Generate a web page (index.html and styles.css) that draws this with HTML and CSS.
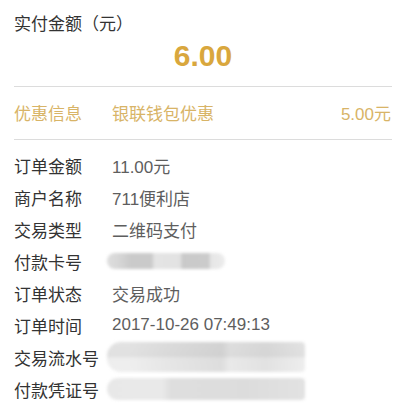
FILE: index.html
```html
<!DOCTYPE html>
<html lang="zh-CN">
<head>
<meta charset="utf-8">
<title>交易详情</title>
<link rel="stylesheet" href="styles.css">
</head>
<body>
<div class="page">
  <div class="title">实付金额（元）</div>
  <div class="amount">6.00</div>
  <div class="discount">
    <span class="label">优惠信息</span>
    <span class="dname">银联钱包优惠</span>
    <span class="dval">5.00元</span>
  </div>
  <div class="list">
    <div class="row"><span class="label">订单金额</span><span class="val">11.00元</span></div>
    <div class="row"><span class="label">商户名称</span><span class="val">711便利店</span></div>
    <div class="row"><span class="label">交易类型</span><span class="val">二维码支付</span></div>
    <div class="row"><span class="label">付款卡号</span><span class="blur blur-card"></span></div>
    <div class="row"><span class="label">订单状态</span><span class="val">交易成功</span></div>
    <div class="row"><span class="label">订单时间</span><span class="val">2017-10-26 07:49:13</span></div>
    <div class="row"><span class="label">交易流水号</span><span class="blur blur-serial"></span></div>
    <div class="row"><span class="label">付款凭证号</span><span class="blur blur-voucher"></span></div>
  </div>
</div>
</body>
</html>
```

FILE: styles.css
```css
html, body {
  margin: 0;
  padding: 0;
  background: #fff;
}
body {
  font-family: "Liberation Sans", "Noto Sans CJK SC", sans-serif;
  font-size: 17px;
  color: #333;
}
.page {
  margin: 0 18px 0 14px;
  padding-top: 13px;
}
.title {
  line-height: 24px;
  height: 24px;
}
.amount {
  text-align: center;
  font-size: 30px;
  font-weight: bold;
  color: #d9a73d;
  line-height: 36px;
  padding: 1px 0 12px;
  border-bottom: 1px solid #dcdcdc;
}
.discount {
  display: flex;
  align-items: center;
  height: 51px;
  padding-bottom: 1px;
  color: #d8b467;
  border-bottom: 1px solid #dcdcdc;
}
.discount .label {
  width: 98px;
}
.discount .dname {
  flex: 1;
}
.discount .dval {
  padding-right: 1px;
}
.list {
  padding-top: 9px;
}
.row {
  display: flex;
  align-items: center;
  height: 32px;
}
.row .label {
  width: 98px;
  flex: none;
  color: #333;
}
.row .val {
  color: #5e5e5e;
}
.blur {
  display: block;
  flex: none;
  margin-left: -5px;
  filter: blur(1.5px);
}
.blur-card {
  width: 118px;
  height: 16px;
  border-radius: 8px;
  background: linear-gradient(90deg, #dedede 0, #d6d6d6 10%, #cacaca 20%, #cacaca 38%, #e4e4e4 40%, #e2e2e2 62%, #c9c9c9 64%, #cbcbcb 86%, #e6e6e6 88%, #ececec 100%);
}
.blur-serial {
  width: 198px;
  height: 30px;
  border-radius: 14px 4px 4px 14px;
  background:
    linear-gradient(90deg, transparent 0, transparent 12%, rgba(0,0,0,0.03) 30%, rgba(0,0,0,0.07) 58%, rgba(0,0,0,0.02) 62%, rgba(0,0,0,0.05) 80%, transparent 100%),
    linear-gradient(180deg, #e2e2e2 0, #e0e0e0 50%, #ededed 52%, #eeeeee 100%);
}
.blur-voucher {
  width: 198px;
  height: 22px;
  border-radius: 11px 4px 4px 11px;
  background: linear-gradient(90deg, #e8e8e8 0, #e9e9e9 28%, #dedede 32%, #dcdcdc 70%, #e2e2e2 100%);
}
```
